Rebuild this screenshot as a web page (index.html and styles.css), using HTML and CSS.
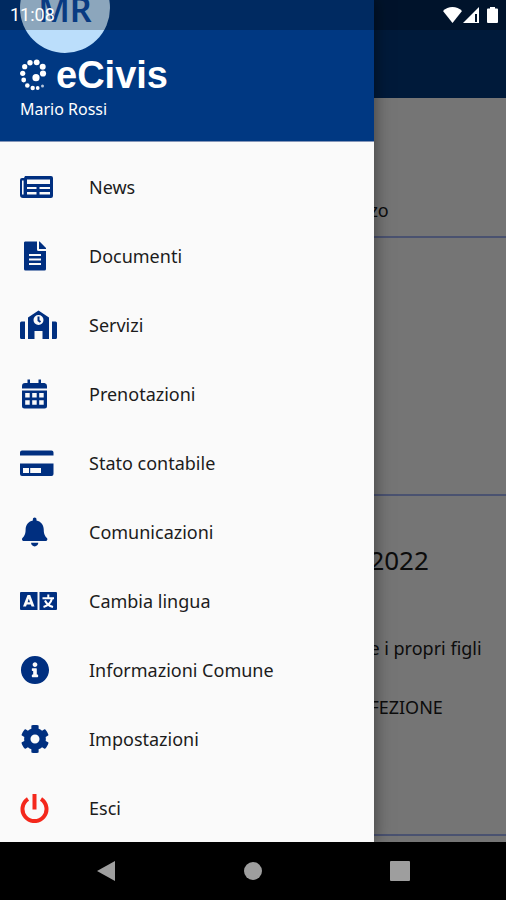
FILE: index.html
```html
<!DOCTYPE html>
<html lang="it">
<head>
<meta charset="utf-8">
<meta name="viewport" content="width=device-width, initial-scale=1">
<title>eCivis</title>
<link rel="stylesheet" href="styles.css">
</head>
<body>
<div class="stage">
  <main class="page">
    <header class="page-bar"></header>
    <section class="card card-intro"><p class="card-text">zo</p></section>
    <section class="card card-blank"></section>
    <section class="card card-notice">
      <h2 class="card-title">2022</h2>
      <p class="card-text">e i propri figli</p>
      <p class="card-text">FEZIONE</p>
    </section>
  </main>
  <aside class="drawer">
    <header class="drawer-head">
      <div class="avatar">MR</div>
      <div class="brand">
        <svg class="brand-mark" viewBox="0 0 28 32" aria-hidden="true">
          <circle cx="10" cy="3.700" r="2.700"/><circle cx="16.700" cy="3.300" r="2.900"/><circle cx="22.700" cy="7.700" r="3"/>
          <circle cx="4.700" cy="7.700" r="2.600"/><circle cx="2.700" cy="14.300" r="2.600"/><circle cx="3.700" cy="21" r="2.400"/>
          <circle cx="7.300" cy="26.500" r="2.300"/><circle cx="12.700" cy="29" r="2.200"/><circle cx="17.700" cy="29" r="1.900"/>
          <circle cx="22.500" cy="27" r="1.500" opacity=".7"/>
          <circle cx="23" cy="14.500" r="3.100"/><circle cx="16" cy="18.700" r="3.600"/>
        </svg>
        <span class="brand-name">eCivis</span>
      </div>
      <div class="user">Mario Rossi</div>
    </header>
    <nav class="menu">
      <a class="item" href="#"><svg class="icon" viewBox="0 0 38 30" aria-hidden="true"><path fill-rule="evenodd" d="M5 4H31a2 2 0 0 1 2 2V24a2 2 0 0 1-2 2H3a3 3 0 0 1-3-3V8a2 2 0 0 1 2-2H4ZM7 7.500V12H30V7.500ZM7 15V17H16.500V15ZM19.500 15V17H30V15ZM7 20V22.500H16.500V20ZM19.500 20V22.500H30V20ZM2 8.500V22.500H3.600V8.500Z"/></svg>News</a>
      <a class="item" href="#"><svg class="icon" viewBox="0 0 38 30" aria-hidden="true"><path fill-rule="evenodd" d="M5 .5H17V8.500a1.500 1.500 0 0 0 1.500 1.500H26V28a1.500 1.500 0 0 1-1.500 1.500H5.500A1.500 1.500 0 0 1 4 28V2A1.500 1.500 0 0 1 5 .5ZM9 13V15H21V13ZM9 17.500V19.500H21V17.500ZM9 22V24H21V22Z"/><path d="M19 .5h.6L26 7v1h-7z"/></svg>Documenti</a>
      <a class="item" href="#"><svg class="icon" viewBox="0 0 38 30" aria-hidden="true"><path d="M0 13a1.500 1.500 0 0 1 1.500-1.500H5V29H1.500A1.500 1.500 0 0 1 0 27.500ZM32 11.500h3.500A1.500 1.500 0 0 1 37 13V27.500A1.500 1.500 0 0 1 35.500 29H32Z"/><path fill-rule="evenodd" d="M8 7.500 18.500.5 29 7.500V29H22.500V21H14.500V29H8ZM18.500 5a5 5 0 1 0 0 10 5 5 0 0 0 0-10Z"/><path class="line" d="M18.500 6.500v4l2 1.500"/></svg>Servizi</a>
      <a class="item" href="#"><svg class="icon" viewBox="0 0 38 30" aria-hidden="true"><path fill-rule="evenodd" d="M7.500.5h2.500V4H18.500V.5H21V4h3.500A3 3 0 0 1 27 7V9.500H2V7a3 3 0 0 1 3-3h2.500ZM2 11.500H27V27a2.500 2.500 0 0 1-2.500 2.500H4.500A2.500 2.500 0 0 1 2 27ZM5.200 14v4.500h4.500V14ZM12.200 14v4.500h4.500V14ZM19.200 14v4.500h4.500V14ZM5.200 21.200v4.500h4.500v-4.500ZM12.200 21.200v4.500h4.500v-4.500ZM19.200 21.200v4.500h4.500v-4.500Z"/></svg>Prenotazioni</a>
      <a class="item" href="#"><svg class="icon" viewBox="0 0 38 30" aria-hidden="true"><path fill-rule="evenodd" d="M2 2.500H31.500A2 2 0 0 1 33.500 4.500V7.500H0V4.500A2 2 0 0 1 2 2.500ZM0 15.500H33.500V26a2 2 0 0 1-2 2H2a2 2 0 0 1-2-2ZM3 20V25H9V20ZM10.200 20V25H21V20Z"/></svg>Stato contabile</a>
      <a class="item" href="#"><svg class="icon" viewBox="0 0 38 30" aria-hidden="true"><path transform="translate(2 .5) scale(.0566)" d="M224 512c35.320 0 63.970-28.650 63.970-64H160.030c0 35.350 28.650 64 63.970 64zm215.390-149.710c-19.320-20.760-55.470-51.990-55.470-154.290 0-77.700-54.480-139.900-127.940-155.160V32c0-17.670-14.320-32-31.980-32s-31.980 14.330-31.980 32v20.840C118.560 68.100 64.080 130.300 64.080 208c0 102.300-36.150 133.530-55.470 154.290-6 6.450-8.660 14.160-8.610 21.710.110 16.400 12.980 32 32.100 32h383.800c19.120 0 32-15.600 32.100-32 .05-7.550-2.610-15.270-8.610-21.710z"/></svg>Comunicazioni</a>
      <a class="item" href="#"><svg class="icon" viewBox="0 0 38 30" aria-hidden="true"><path fill-rule="evenodd" d="M1 6H17.500V24H1A1 1 0 0 1 0 23V7A1 1 0 0 1 1 6ZM7.500 9 3 20.500H6L6.800 18.500H10.800L11.600 20.500H14.500L10.200 9ZM8.800 12.700 10 16.200H7.600Z"/><path d="M19.500 6H36a1 1 0 0 1 1 1V23a1 1 0 0 1-1 1H19.500Z"/><path class="glyph" d="M28.300 8.500V12M22.500 12.300H34M31.800 13C31 16.500 28 19.500 23.500 21M25 14.500C26.500 18 29.500 20 33 21"/></svg>Cambia lingua</a>
      <a class="item" href="#"><svg class="icon" viewBox="0 0 38 30" aria-hidden="true"><path transform="translate(.5 .5) scale(.0566)" d="M256 8C119.043 8 8 119.083 8 256c0 136.997 111.043 248 248 248s248-111.003 248-248C504 119.083 392.957 8 256 8zm0 110c23.196 0 42 18.804 42 42s-18.804 42-42 42-42-18.804-42-42 18.804-42 42-42zm56 254c0 6.627-5.373 12-12 12h-88c-6.627 0-12-5.373-12-12v-24c0-6.627 5.373-12 12-12h12v-64h-12c-6.627 0-12-5.373-12-12v-24c0-6.627 5.373-12 12-12h64c6.627 0 12 5.373 12 12v100h12c6.627 0 12 5.373 12 12v24z"/></svg>Informazioni Comune</a>
      <a class="item" href="#"><svg class="icon" viewBox="0 0 38 30" aria-hidden="true"><path transform="translate(.5 .5) scale(.0566)" d="M487.400 315.700l-42.600-24.600c4.300-23.200 4.300-47 0-70.200l42.600-24.600c4.900-2.800 7.100-8.600 5.500-14-11.100-35.600-30-67.800-54.700-94.600-3.800-4.100-10-5.100-14.800-2.300L380.800 110c-17.900-15.400-38.500-27.300-60.800-35.100V25.800c0-5.600-3.900-10.500-9.400-11.700-36.700-8.200-74.300-7.800-109.200 0-5.500 1.200-9.400 6.100-9.400 11.700V75c-22.200 7.900-42.800 19.800-60.800 35.100L88.700 85.500c-4.900-2.800-11-1.900-14.800 2.300-24.700 26.700-43.600 58.900-54.700 94.600-1.700 5.400.6 11.200 5.500 14L67.300 221c-4.300 23.200-4.300 47 0 70.200l-42.600 24.600c-4.900 2.800-7.100 8.600-5.500 14 11.100 35.600 30 67.800 54.700 94.600 3.800 4.100 10 5.100 14.800 2.300l42.600-24.600c17.900 15.400 38.500 27.300 60.800 35.100v49.200c0 5.600 3.900 10.500 9.400 11.700 36.700 8.200 74.300 7.800 109.200 0 5.500-1.200 9.400-6.100 9.400-11.700v-49.200c22.200-7.900 42.800-19.800 60.800-35.100l42.600 24.600c4.900 2.800 11 1.900 14.800-2.300 24.700-26.700 43.600-58.900 54.700-94.600 1.500-5.500-.7-11.300-5.600-14.100zM256 336c-44.100 0-80-35.900-80-80s35.900-80 80-80 80 35.900 80 80-35.900 80-80 80z"/></svg>Impostazioni</a>
      <a class="item" href="#"><svg class="icon icon-exit" viewBox="0 0 38 30" aria-hidden="true"><path d="M8 6A12 12 0 1 0 21 6M14.500 1V16.500"/></svg>Esci</a>
    </nav>
  </aside>
  <div class="status">
    <span class="clock">11:08</span>
    <svg class="status-icons" viewBox="0 0 56 18" aria-hidden="true">
      <path d="M0 5C5-.3 14-.3 19 5L9.500 17Z"/>
      <path fill-rule="evenodd" d="M36 1V17H20ZM32 8V16H34V8Z"/>
      <path d="M47 1H52V2.500H54a1 1 0 0 1 1 1V16a1 1 0 0 1-1 1H45a1 1 0 0 1-1-1V3.500a1 1 0 0 1 1-1h2Z"/>
    </svg>
  </div>
</div>
<footer class="system-nav">
  <button class="key" type="button" aria-label="Indietro"><svg viewBox="0 0 20 22"><path d="M19 1V21L1 11Z"/></svg></button>
  <button class="key" type="button" aria-label="Home"><svg viewBox="0 0 20 22"><circle cx="10" cy="11" r="9"/></svg></button>
  <button class="key" type="button" aria-label="Recenti"><svg viewBox="0 0 20 22"><rect x="0" y="1" width="20" height="20" rx="1"/></svg></button>
</footer>
</body>
</html>
```

FILE: styles.css
```css
* {
  box-sizing: border-box;
}

body {
  margin: 0;
  min-height: 100vh;
  display: flex;
  flex-direction: column;
  background: #000;
  color: #1c1c1c;
  font-family: "Noto Sans", sans-serif;
  font-size: 18px;
  line-height: 24px;
}

.stage {
  flex: 1;
  position: relative;
  display: grid;
  overflow: hidden;
}

.page {
  display: flex;
  flex-direction: column;
  background: #757575;
  color: #0c0c0c;
}

.page-bar {
  height: 98px;
  background: #001a3a;
}

.card {
  padding-left: 73%;
  border-bottom: 2px solid #4a5270;
}

.card-intro {
  padding-top: 100px;
  padding-bottom: 14px;
}

.card-blank {
  height: 258px;
}

.card-notice {
  height: 340px;
  padding-top: 48px;
}

.card-title,
.card-text {
  margin: 0;
  white-space: nowrap;
}

.card-title {
  font-size: 26px;
  font-weight: 400;
  line-height: 32px;
  margin-bottom: 60px;
}

.card-text + .card-text {
  margin-top: 35px;
}

.drawer {
  position: absolute;
  top: 0;
  bottom: 0;
  left: 0;
  width: 74%;
  overflow: hidden;
  background: #fafafa;
  box-shadow: 0 0 16px rgba(0, 0, 0, 0.5);
}

.drawer-head {
  height: 142px;
  padding-left: 20px;
  overflow: hidden;
  background: #003882;
  border-bottom: 1px solid #8495b8;
  color: #fff;
}

.avatar {
  width: 90px;
  height: 90px;
  margin-top: -37px;
  border-radius: 50%;
  background: #bbdefb;
  color: #0d4fae;
  font-size: 34px;
  font-weight: 600;
  line-height: 92px;
  text-align: center;
}

.brand {
  display: flex;
  align-items: center;
  gap: 8px;
  height: 44px;
}

.brand-mark {
  width: 28px;
  height: 32px;
  fill: #fff;
}

.brand-name {
  font-family: "Liberation Sans", sans-serif;
  font-size: 38px;
  font-weight: 700;
}

.user {
  font-size: 16px;
}

.menu {
  padding-top: 10px;
}

.item {
  display: flex;
  align-items: center;
  gap: 31px;
  height: 69px;
  padding-left: 20px;
  color: inherit;
  text-decoration: none;
  white-space: nowrap;
}

.icon {
  width: 38px;
  height: 30px;
  fill: #002f80;
}

.icon .line,
.icon .glyph {
  fill: none;
  stroke: #002f80;
  stroke-width: 2;
}

.icon .glyph {
  stroke: #fff;
}

.icon-exit {
  fill: none;
  stroke: #f4281c;
  stroke-width: 4;
}

.status {
  position: absolute;
  top: 0;
  left: 0;
  right: 0;
  display: flex;
  align-items: center;
  justify-content: space-between;
  height: 30px;
  padding: 0 7px 0 10px;
  background: rgba(0, 0, 0, 0.25);
  color: #fff;
}

.clock {
  font-family: Roboto, sans-serif;
  font-size: 18px;
}

.status-icons {
  width: 56px;
  height: 18px;
  fill: #fff;
}

.system-nav {
  display: flex;
  justify-content: center;
  height: 58px;
}

.key {
  display: flex;
  align-items: center;
  justify-content: center;
  width: 29%;
  padding: 0;
  border: 0;
  background: none;
}

.key svg {
  width: 20px;
  height: 22px;
  fill: #9e9e9e;
}
```
